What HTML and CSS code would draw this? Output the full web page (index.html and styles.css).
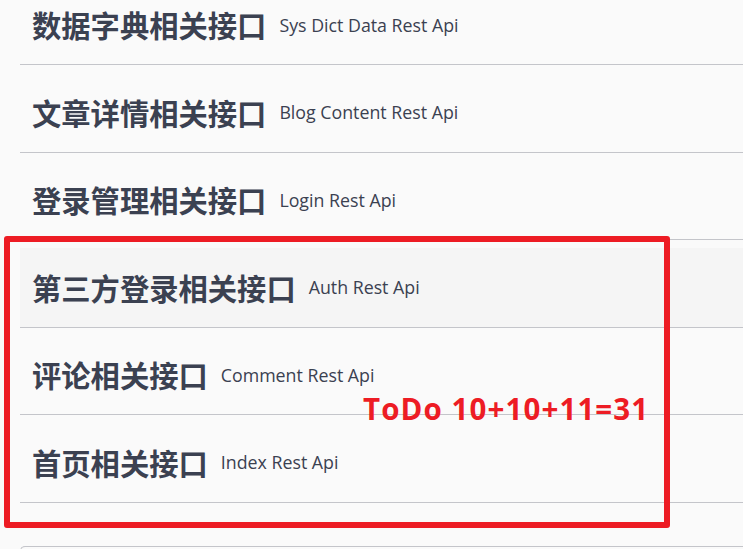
FILE: index.html
```html
<!DOCTYPE html>
<html lang="zh-CN">
<head>
<meta charset="utf-8">
<title>API Tags</title>
<link rel="stylesheet" href="styles.css">
</head>
<body>
<div class="page">
  <div class="tags">
    <div class="tag"><h3 class="tag-title">数据字典相关接口</h3><small class="tag-desc">Sys Dict Data Rest Api</small></div>
    <div class="tag"><h3 class="tag-title">文章详情相关接口</h3><small class="tag-desc">Blog Content Rest Api</small></div>
    <div class="tag"><h3 class="tag-title">登录管理相关接口</h3><small class="tag-desc">Login Rest Api</small></div>
    <div class="tag tag-hover"><h3 class="tag-title">第三方登录相关接口</h3><small class="tag-desc">Auth Rest Api</small></div>
    <div class="tag"><h3 class="tag-title">评论相关接口</h3><small class="tag-desc">Comment Rest Api</small></div>
    <div class="tag"><h3 class="tag-title">首页相关接口</h3><small class="tag-desc">Index Rest Api</small></div>
  </div>
  <div class="models"></div>
  <div class="annot-box"></div>
  <div class="annot-text">ToDo 10+10+11=31</div>
</div>
</body>
</html>
```
FILE: styles.css
```css
html, body {
  margin: 0;
  padding: 0;
  background: #fafafa;
  overflow: hidden;
}
.page {
  position: relative;
  width: 743px;
  height: 549px;
  overflow: hidden;
}
.tags {
  margin-top: -22.5px;
  padding-left: 20px;
}
.tag {
  margin-top: 8px;
  height: 78.5px;
  display: flex;
  align-items: center;
  padding: 0 0 0 12px;
  border-bottom: 1px solid #c4c5ca;
  color: #3b4151;
}
.tag-hover {
  background: #f5f5f5;
}
.tag-title {
  margin: 0;
  font-family: "Noto Sans CJK SC", "Open Sans", sans-serif;
  font-weight: 700;
  font-size: 29.3px;
  line-height: 1.2;
  color: #3b4151;
}
.tag-desc {
  margin-left: 13px;
  font-family: "Open Sans", "Noto Sans", sans-serif;
  font-size: 17.8px;
  color: #3b4151;
}
.models {
  margin: 43px 0 0 20px;
  height: 100px;
  border: 1px solid #c4c5ca;
  border-right: none;
  border-radius: 5px 0 0 0;
}
.annot-box {
  position: absolute;
  left: 4px;
  top: 236px;
  width: 654px;
  height: 280px;
  border: 6px solid #ed1c24;
  border-radius: 3px;
}
.annot-text {
  position: absolute;
  left: 363px;
  top: 389px;
  font-family: "Open Sans", sans-serif;
  font-weight: 700;
  font-size: 29.5px;
  letter-spacing: 1.1px;
  line-height: 40px;
  color: #ed1c24;
  white-space: nowrap;
}
```
